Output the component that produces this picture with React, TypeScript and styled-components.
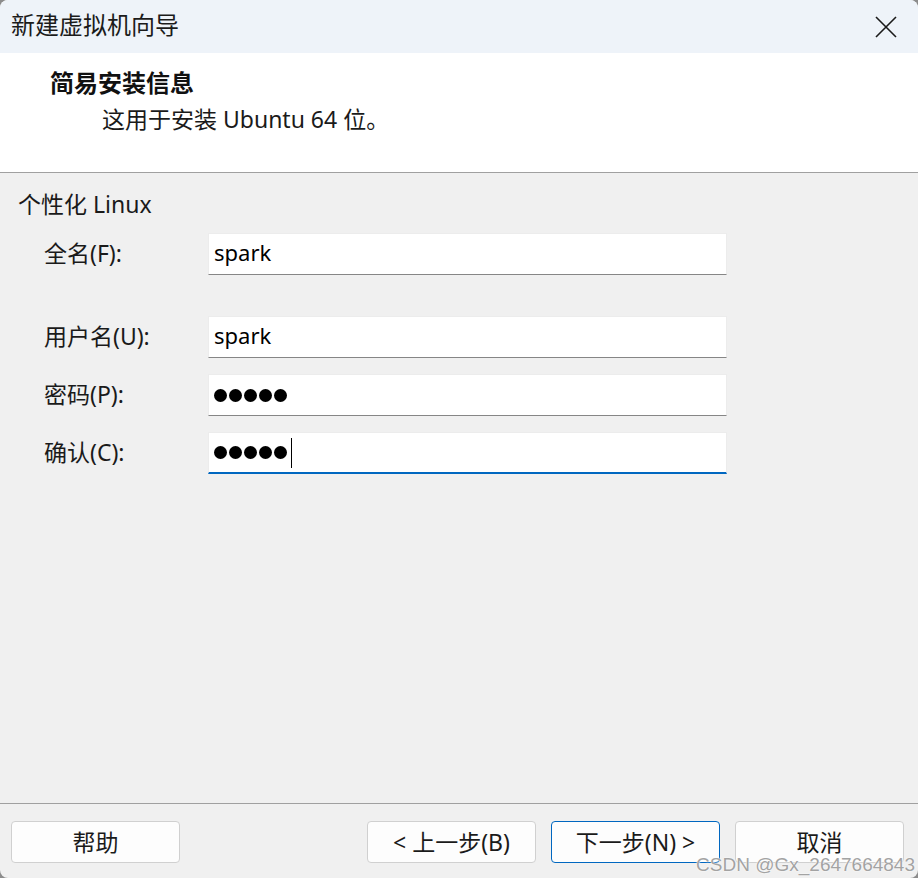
import styled, { createGlobalStyle } from 'styled-components';

const GlobalStyle = createGlobalStyle`
  html, body {
    margin: 0;
    padding: 0;
    background: #8c8c8c;
  }
  body {
    font-family: "Noto Sans", "Noto Sans CJK SC", sans-serif;
  }
`;

const Window = styled.div`
  position: relative;
  width: 918px;
  height: 878px;
  display: flex;
  flex-direction: column;
  background: #f0f0f0;
  border-radius: 8px;
  overflow: hidden;
  color: #1a1a1a;
  font-size: 23px;
`;

const TitleBar = styled.div`
  height: 53px;
  flex: none;
  display: flex;
  align-items: center;
  justify-content: space-between;
  padding: 0 20px 0 11px;
  background: #eef3f9;
  box-sizing: border-box;
`;

const TitleText = styled.span`
  font-size: 24px;
  color: #1b1b1b;
  line-height: 30px;
  padding-bottom: 3px;
`;

const CloseButton = styled.div`
  width: 24px;
  height: 24px;
  display: flex;
  align-items: center;
  justify-content: center;
`;

const Header = styled.div`
  height: 120px;
  flex: none;
  background: #ffffff;
  border-bottom: 1px solid #a0a0a0;
  padding-top: 14px;
  box-sizing: border-box;
  display: flex;
  flex-direction: column;
`;

const HeaderTitle = styled.div`
  padding-left: 50px;
  font-size: 24px;
  font-weight: 700;
  line-height: 32px;
  color: #111;
`;

const HeaderSub = styled.div`
  padding-left: 102px;
  margin-top: 4px;
  font-size: 23px;
  line-height: 32px;
  color: #1a1a1a;
`;

const Body = styled.div`
  flex: 1;
  padding: 15px 0 0 18px;
  box-sizing: border-box;
`;

const GroupTitle = styled.div`
  font-size: 23px;
  line-height: 32px;
  color: #1a1a1a;
`;

const Form = styled.div`
  margin-top: 13px;
  margin-left: 26px;
  display: grid;
  grid-template-columns: 164px 519px;
  row-gap: 16px;
`;

const Label = styled.div<{ $gap?: boolean }>`
  display: flex;
  align-items: center;
  font-size: 23px;
  height: 42px;
  box-sizing: border-box;
  padding-bottom: 5px;
  margin-top: ${p => (p.$gap ? '25px' : '0')};
`;

const Field = styled.div<{ $focused?: boolean; $gap?: boolean }>`
  height: 42px;
  box-sizing: border-box;
  background: #ffffff;
  border: 1px solid #ececec;
  border-bottom: ${p => (p.$focused ? '2px solid #0067c0' : '1px solid #868686')};
  padding: 0 5px 4px;
  display: flex;
  align-items: center;
  font-size: 22px;
  color: #000;
  margin-top: ${p => (p.$gap ? '25px' : '0')};
`;

const Dots = styled.div`
  display: flex;
  align-items: center;
  gap: 2px;
  margin-top: 4px;
`;

const Dot = styled.span`
  width: 13px;
  height: 13px;
  border-radius: 50%;
  background: #000;
`;

const Caret = styled.span`
  width: 1px;
  height: 30px;
  margin-left: 2px;
  background: #000;
`;

const Footer = styled.div`
  height: 75px;
  flex: none;
  box-sizing: border-box;
  border-top: 1px solid #a0a0a0;
  padding: 17px 14px 0 11px;
  display: flex;
  justify-content: space-between;
  align-items: flex-start;
`;

const ButtonGroup = styled.div`
  display: flex;
  gap: 15px;
`;

const Button = styled.button<{ $primary?: boolean }>`
  width: 169px;
  height: 42px;
  box-sizing: border-box;
  border-radius: 4px;
  border: 1px solid ${p => (p.$primary ? '#0067c0' : '#d0d0d0')};
  background: #fdfdfd;
  font-family: "Noto Sans", "Noto Sans CJK SC", sans-serif;
  font-size: 23px;
  color: #1a1a1a;
  padding: 0 0 2px;
  display: flex;
  align-items: center;
  justify-content: center;
`;

const Watermark = styled.div`
  position: absolute;
  right: 3px;
  bottom: 2px;
  font-family: "Liberation Sans", Arial, sans-serif;
  font-size: 19px;
  line-height: 22px;
  color: #a3a3a3;
  text-shadow: 0 0 2px #ffffff, 0 0 1px #ffffff;
  pointer-events: none;
`;

const PasswordDots = ({ caret }: { caret?: boolean }) => (
  <Dots>
    {[0, 1, 2, 3, 4].map(i => (
      <Dot key={i} />
    ))}
    {caret && <Caret />}
  </Dots>
);

const App = () => {
  return (
    <>
      <GlobalStyle />
      <Window>
        <TitleBar>
          <TitleText>新建虚拟机向导</TitleText>
          <CloseButton>
            <svg width="22" height="22" viewBox="0 0 22 22">
              <path d="M1 1 L21 21 M21 1 L1 21" stroke="#1a1a1a" strokeWidth="1.6" fill="none" />
            </svg>
          </CloseButton>
        </TitleBar>
        <Header>
          <HeaderTitle>简易安装信息</HeaderTitle>
          <HeaderSub>这用于安装 Ubuntu 64 位。</HeaderSub>
        </Header>
        <Body>
          <GroupTitle>个性化 Linux</GroupTitle>
          <Form>
            <Label>全名(F):</Label>
            <Field>spark</Field>
            <Label $gap>用户名(U):</Label>
            <Field $gap>spark</Field>
            <Label>密码(P):</Label>
            <Field>
              <PasswordDots />
            </Field>
            <Label>确认(C):</Label>
            <Field $focused>
              <PasswordDots caret />
            </Field>
          </Form>
        </Body>
        <Footer>
          <Button>帮助</Button>
          <ButtonGroup>
            <Button>&lt; 上一步(B)</Button>
            <Button $primary>下一步(N) &gt;</Button>
            <Button>取消</Button>
          </ButtonGroup>
        </Footer>
        <Watermark>CSDN @Gx_2647664843</Watermark>
      </Window>
    </>
  );
};

export default App;
